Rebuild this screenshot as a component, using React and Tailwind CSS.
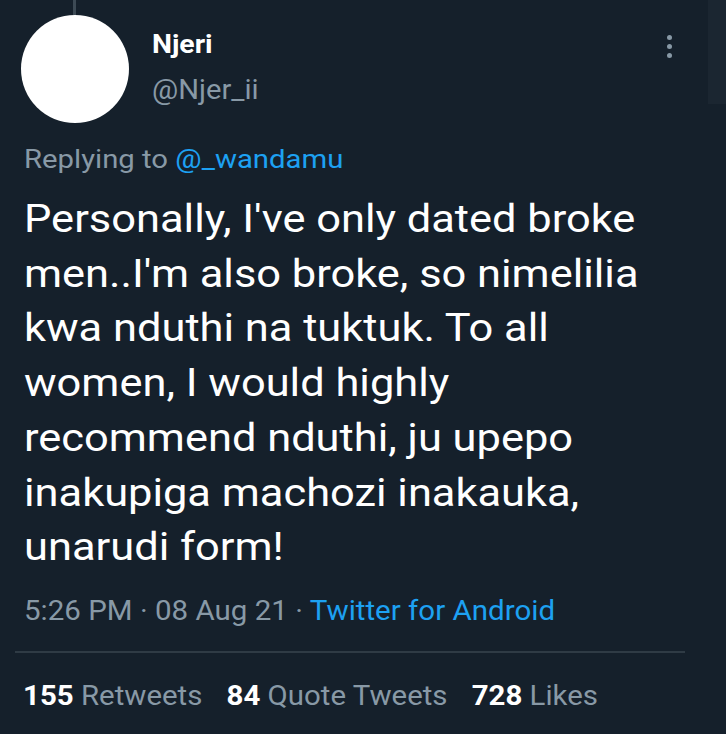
import React from "react";

const lines = [
  "Personally, I've only dated broke",
  "men..I'm also broke, so nimelilia",
  "kwa nduthi na tuktuk. To all",
  "women, I would highly",
  "recommend nduthi, ju upepo",
  "inakupiga machozi inakauka,",
  "unarudi form!",
];

export default function App() {
  return (
    <div className="w-[726px] h-[734px] bg-[#15202b] overflow-hidden relative" style={{ fontFamily: "Roboto, 'Noto Sans', sans-serif" }}>
      <div className="absolute right-0 top-0 w-[18px] h-[104px] bg-[#1b2631]" />
      <div className="flex">
        <div className="w-[152px] shrink-0 flex flex-col items-start pl-[21px]">
          <div className="w-[3px] h-[15px] bg-[#3d4a55] ml-[52px]" />
          <div className="w-[108px] h-[108px] rounded-full bg-white" />
        </div>
        <div className="flex-1 pt-[24px]">
          <div className="text-[26px] font-bold text-white leading-[40px] origin-left scale-x-[1.09]">Njeri</div>
          <div className="text-[27px] text-[#8899a6] leading-[40px] mt-[6px] origin-left scale-x-[1.08]">@Njer_ii</div>
        </div>
        <div className="w-[64px] pt-[35px] flex flex-col items-start gap-[4px] pl-[5px]">
          <div className="w-[5px] h-[5px] rounded-full bg-[#8899a6]" />
          <div className="w-[5px] h-[5px] rounded-full bg-[#8899a6]" />
          <div className="w-[5px] h-[5px] rounded-full bg-[#8899a6]" />
        </div>
      </div>
      <div className="pl-[24px] pr-[20px]">
        <div className="text-[26px] leading-[36px] text-[#8899a6] mt-[18px] origin-left scale-x-[1.127] whitespace-nowrap">
          Replying to <span className="text-[#1da1f2]">@_wandamu</span>
        </div>
        <div className="text-[39px] leading-[54.7px] text-white mt-[15px] origin-left scale-x-[1.113] whitespace-nowrap">
          {lines.map((l) => (
            <div key={l}>{l}</div>
          ))}
        </div>
        <div className="text-[28px] leading-[40px] text-[#8899a6] mt-[16px] origin-left scale-x-[1.054] whitespace-nowrap">
          5:26 PM · 08 Aug 21 · <span className="text-[#1da1f2]">Twitter for Android</span>
        </div>
      </div>
      <div className="ml-[15px] w-[670px] h-[2px] bg-[#2f3b45] mt-[20px]" />
      <div className="pl-[22px] mt-[23px] text-[28px] leading-[40px] text-[#8899a6] flex gap-[23px] origin-left scale-x-[1.05] whitespace-nowrap">
        <span><span className="font-bold text-white">155</span> Retweets</span>
        <span><span className="font-bold text-white">84</span> Quote Tweets</span>
        <span><span className="font-bold text-white">728</span> Likes</span>
      </div>
    </div>
  );
}
